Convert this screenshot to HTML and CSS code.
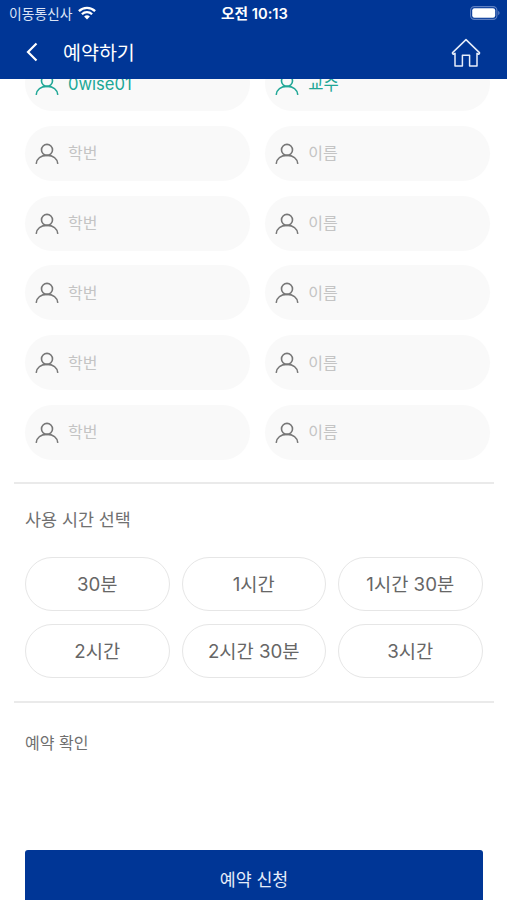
FILE: index.html
```html
<!DOCTYPE html>
<html lang="ko">
<head>
<meta charset="utf-8">
<meta name="viewport" content="width=device-width, initial-scale=1">
<title>예약하기</title>
<link rel="stylesheet" href="styles.css">
</head>
<body>
<svg class="defs" aria-hidden="true">
  <symbol id="person" viewBox="0 0 24 22">
    <circle cx="12" cy="6.9" r="5.5"/>
    <path d="M1.2 20.8C1.7 15.6 6 12.4 12 12.4s10.3 3.2 10.8 8.4"/>
  </symbol>
</svg>
<header class="header">
  <div class="status">
    <div class="carrier"><span>이동통신사</span>
      <svg class="wifi" viewBox="0 0 18 14"><g fill="none" stroke="#fff" stroke-width="2.3"><path d="M.9 5.1a11.6 11.6 0 0 1 16.2 0"/><path d="M3.9 8.2a7.3 7.3 0 0 1 10.2 0"/></g><path d="M9 13.5 6.1 10.6a4.2 4.2 0 0 1 5.8 0z" fill="#fff"/></svg>
    </div>
    <div class="clock">오전 10:13</div>
    <svg class="battery" viewBox="0 0 30 14"><rect x=".6" y=".6" width="26.3" height="12.8" rx="3.8" fill="none" stroke="#5f80c2" stroke-width="1.1"/><rect x="2.2" y="2.2" width="23" height="9.6" rx="2.2" fill="#fff"/><path d="M28.3 4.8c1.6.7 1.6 3.7 0 4.4z" fill="#7390ca"/></svg>
  </div>
  <div class="nav">
    <svg class="back" viewBox="0 0 12 20"><path d="M10.5 1.5 2 10l8.5 8.5"/></svg>
    <h1 class="title">예약하기</h1>
    <svg class="home" viewBox="0 0 30 30"><path d="M15 1.6 28.4 14.6c.6.7-.4 1.9-1.2 1.4l-1.2-.7v12.7h-7.4V17.2h-7.2v10.8H4V15.3l-1.2.7c-.8.5-1.8-.7-1.2-1.4z"/></svg>
  </div>
</header>
<main class="content">
  <section class="people">
    <div class="field filled"><svg class="person"><use href="#person"/></svg><span>0wise01</span></div>
    <div class="field filled"><svg class="person"><use href="#person"/></svg><span>교수</span></div>
    <div class="field"><svg class="person"><use href="#person"/></svg><span>학번</span></div>
    <div class="field"><svg class="person"><use href="#person"/></svg><span>이름</span></div>
    <div class="field"><svg class="person"><use href="#person"/></svg><span>학번</span></div>
    <div class="field"><svg class="person"><use href="#person"/></svg><span>이름</span></div>
    <div class="field"><svg class="person"><use href="#person"/></svg><span>학번</span></div>
    <div class="field"><svg class="person"><use href="#person"/></svg><span>이름</span></div>
    <div class="field"><svg class="person"><use href="#person"/></svg><span>학번</span></div>
    <div class="field"><svg class="person"><use href="#person"/></svg><span>이름</span></div>
    <div class="field"><svg class="person"><use href="#person"/></svg><span>학번</span></div>
    <div class="field"><svg class="person"><use href="#person"/></svg><span>이름</span></div>
  </section>
  <section class="usage">
    <h2 class="heading">사용 시간 선택</h2>
    <div class="times">
      <button class="time">30분</button>
      <button class="time">1시간</button>
      <button class="time">1시간 30분</button>
      <button class="time">2시간</button>
      <button class="time">2시간 30분</button>
      <button class="time">3시간</button>
    </div>
  </section>
  <section class="confirm">
    <h2 class="heading small">예약 확인</h2>
    <button class="submit">예약 신청</button>
  </section>
</main>
</body>
</html>
```
FILE: styles.css
```css
* { box-sizing: border-box; }
body {
  margin: 0;
  height: 900px;
  overflow: hidden;
  display: flex;
  flex-direction: column;
  background: #fff;
  font-family: Inter, "Noto Sans CJK KR", sans-serif;
}
.defs { display: none; }
h1, h2 { margin: 0; font-weight: 400; }
button { padding: 0; font-family: inherit; }

.header {
  flex: none;
  height: 79px;
  background: #003696;
  color: #fff;
}
.status {
  height: 26px;
  display: grid;
  grid-template-columns: 1fr auto 1fr;
  align-items: center;
  padding: 0 7px 0 9px;
}
.carrier {
  display: flex;
  align-items: center;
  gap: 6px;
  font-size: 13.8px;
  line-height: 20px;
  color: #dbe4f6;
}
.carrier span, .clock { padding-top: 2px; }
.wifi { width: 18px; height: 14px; }
.clock { font-size: 14.7px; font-weight: 600; line-height: 20px; }
.battery { width: 30px; height: 14px; justify-self: end; }
.nav {
  height: 52px;
  display: flex;
  align-items: center;
  padding: 0 26px;
}
.back {
  width: 12px;
  height: 20px;
  fill: none;
  stroke: #fff;
  stroke-width: 2.2;
}
.title {
  margin-left: 25px;
  padding-top: 2px;
  flex: 1;
  font-size: 19.5px;
  line-height: 28px;
}
.home {
  width: 30px;
  height: 30px;
  margin-top: 2px;
  fill: none;
  stroke: #e6edfa;
  stroke-width: 1.5;
  stroke-linejoin: round;
}

.content { flex: 1; overflow: hidden; }
.people {
  margin: -23px 17px 0 25px;
  display: grid;
  grid-template-columns: 1fr 1fr;
  gap: 14.8px 15.5px;
}
.field {
  height: 55px;
  display: flex;
  align-items: center;
  gap: 9px;
  padding: 0 0 0 10px;
  border-radius: 28px;
  background: #f9f9f9;
  color: #c4c4c4;
  font-size: 16px;
  line-height: 24px;
}
.person {
  width: 24px;
  height: 22px;
  margin-top: 1px;
  fill: none;
  stroke: #777;
  stroke-width: 1.6;
}
.filled { padding-top: 1px; color: #20a796; font-size: 16.6px; }
.filled .person { stroke: #20a796; }

.usage {
  margin: 22.5px 13px 0 14px;
  padding: 24px 11px 22.5px;
  border-top: 2px solid #eaeaea;
}
.heading {
  font-size: 17.4px;
  line-height: 24px;
  color: #707070;
}
.heading.small { font-size: 16px; }
.times {
  margin-top: 24.5px;
  display: grid;
  grid-template-columns: repeat(3, 144.5px);
  gap: 12.5px 12px;
}
.time {
  height: 54.5px;
  padding-bottom: 3px;
  border: 1.5px solid #e6e6e6;
  border-radius: 28px;
  background: #fff;
  color: #666;
  font-size: 18.7px;
}
.confirm {
  margin: 0 13px 0 14px;
  padding: 28px 11px 0;
  border-top: 2px solid #eaeaea;
}
.submit {
  display: block;
  width: 458px;
  height: 60px;
  margin-top: 95px;
  padding-bottom: 2px;
  border: 0;
  border-radius: 3px;
  background: #003696;
  color: #e6edfa;
  font-size: 17.3px;
}
```
